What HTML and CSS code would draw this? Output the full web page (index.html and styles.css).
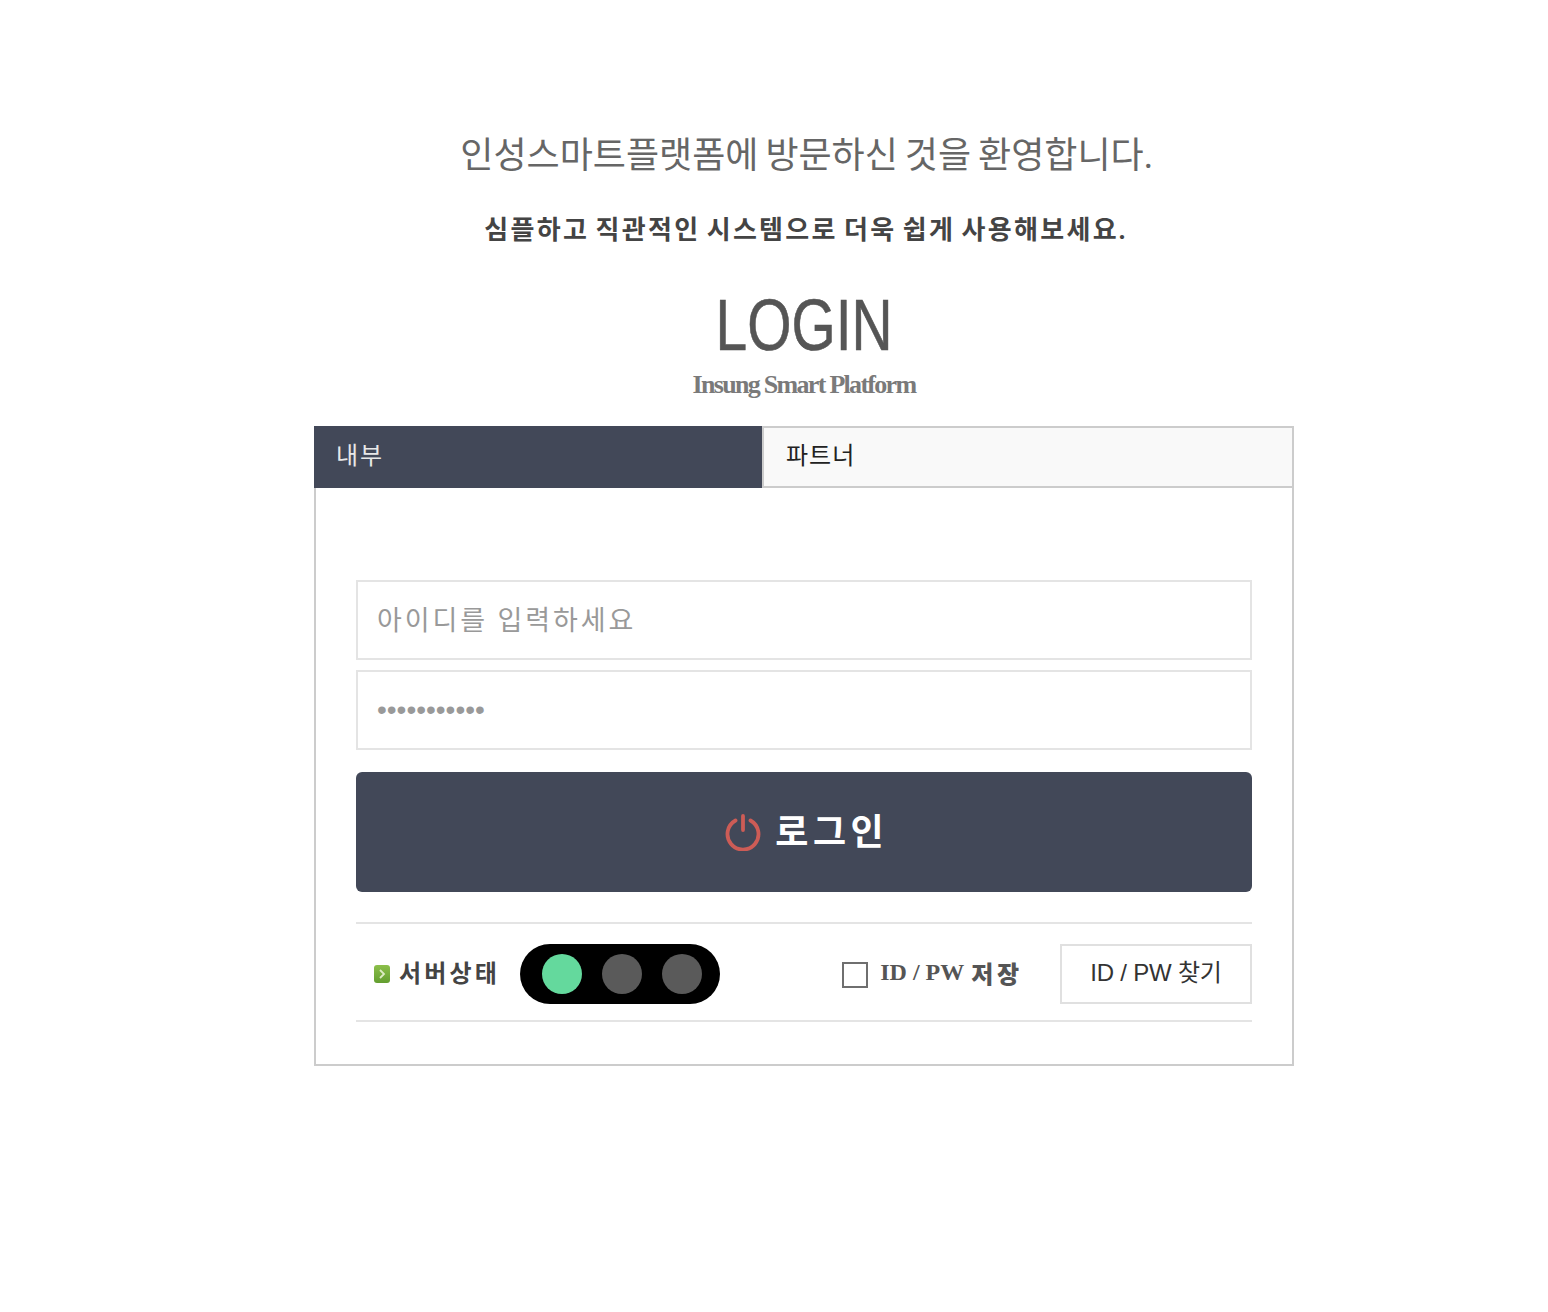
FILE: index.html
```html
<!DOCTYPE html>
<html lang="ko">
<head>
    <meta charset="UTF-8">
    <meta name="viewport" content="width=device-width, initial-scale=1.0">
    <title>인성스마트플랫폼 로그인</title>
    <link rel="stylesheet" href="styles.css">
</head>
<body>
    <div class="wrap">
        <h1 class="welcome">인성스마트플랫폼에 방문하신 것을 환영합니다.</h1>
        <p class="sub">심플하고 직관적인 시스템으로 더욱 쉽게 사용해보세요.</p>
        <h2 class="login-title"><span>LOGIN</span></h2>
        <p class="brand">Insung Smart Platform</p>

        <div class="tabs">
            <a class="tab tab-on">내부</a>
            <a class="tab tab-off">파트너</a>
        </div>
        <div class="panel">
            <input class="field" type="text" placeholder="아이디를 입력하세요">
            <input class="field field-pw" type="password" value="12345678901">
            <button class="login-btn">
                <svg class="power" viewBox="0 0 38 38" width="38" height="38" aria-hidden="true">
                    <path d="M11.5 7.5 A15.5 15.5 0 1 0 26.5 7.5" fill="none" stroke="#cd5c56" stroke-width="3.8" stroke-linecap="round"/>
                    <path d="M19 3 V17" fill="none" stroke="#cd5c56" stroke-width="3.8" stroke-linecap="round"/>
                </svg>
                <span>로그인</span>
            </button>
            <div class="status-row">
                <div class="server">
                    <span class="bullet">
                        <svg viewBox="0 0 16 18" width="16" height="18" aria-hidden="true">
                            <path d="M6 5 L10 9 L6 13" fill="none" stroke="#dcebc4" stroke-width="1.8"/>
                        </svg>
                    </span>
                    <span class="server-label">서버상태</span>
                    <div class="lights">
                        <i class="light light-on"></i>
                        <i class="light"></i>
                        <i class="light"></i>
                    </div>
                </div>
                <label class="save"><span class="check"></span>ID / PW <b>저장</b></label>
                <button class="find-btn">ID / PW 찾기</button>
            </div>
        </div>
    </div>
</body>
</html>
```

FILE: styles.css
```css
* {
    box-sizing: border-box;
}

body {
    margin: 0;
    padding-left: 60px;
    background: #fff;
    font-family: "Liberation Sans", "Noto Sans CJK KR", sans-serif;
}

.wrap {
    width: 980px;
    margin: 0 auto;
    padding-top: 131px;
    padding-bottom: 246px;
    text-align: center;
}

.welcome {
    margin: 0;
    height: 50px;
    padding-left: 5px;
    line-height: 50px;
    font-family: "Liberation Serif", "Noto Sans CJK KR", serif;
    font-size: 36px;
    font-weight: 400;
    letter-spacing: 0;
    word-spacing: -2px;
    color: #666;
    white-space: nowrap;
}

.sub {
    margin: 30px 0 0;
    height: 40px;
    padding-left: 4px;
    line-height: 40px;
    font-family: "Liberation Serif", "Noto Sans CJK KR", serif;
    font-size: 26px;
    font-weight: 700;
    letter-spacing: 2.3px;
    word-spacing: -2.5px;
    color: #444;
}

.login-title {
    margin: 34px 0 0;
    height: 80px;
    line-height: 80px;
    font-size: 72px;
    font-weight: 400;
    letter-spacing: 0;
    color: #555;
}

.login-title span {
    display: inline-block;
    transform: scaleX(0.79);
    -webkit-text-stroke: 0.6px #555;
}

.brand {
    margin: 4px 0 0;
    height: 32px;
    line-height: 32px;
    font-family: "Liberation Serif", serif;
    font-size: 26px;
    font-weight: 700;
    letter-spacing: -1.7px;
    color: #7a7a7a;
}

.tabs {
    display: flex;
    margin-top: 25px;
    height: 62px;
    text-align: left;
}

.tab {
    display: flex;
    align-items: center;
    padding-left: 22px;
    padding-bottom: 8px;
    font-family: "Liberation Serif", "Noto Sans CJK KR", serif;
    font-size: 24px;
    letter-spacing: 1px;
}

.tab-on {
    width: 448px;
    background: #424858;
    color: #e8e8e8;
    letter-spacing: 2px;
}

.tab-off {
    width: 532px;
    background: #f9f9f9;
    border: 2px solid #ccc;
    color: #222;
}

.panel {
    height: 578px;
    padding: 92px 40px 0;
    border: 2px solid #ccc;
    border-top: 0;
}

.field {
    display: block;
    width: 100%;
    height: 80px;
    margin-bottom: 10px;
    padding: 2px 19px 0;
    border: 2px solid #e4e4e4;
    outline: 0;
    background: #fff;
    font-family: "Liberation Serif", "Noto Sans CJK KR", serif;
    font-size: 27px;
    letter-spacing: 2.9px;
    color: #999;
}

.field::placeholder {
    color: #999;
    opacity: 1;
}

.field-pw {
    padding-top: 0;
    font-family: "Liberation Sans", sans-serif;
    font-size: 28px;
    letter-spacing: 0;
}

.login-btn {
    display: flex;
    align-items: center;
    justify-content: center;
    gap: 13px;
    width: 100%;
    height: 120px;
    margin-top: 22px;
    border: 0;
    border-radius: 6px;
    background: #424858;
    font-family: "Liberation Serif", "Noto Sans CJK KR", serif;
    font-size: 36px;
    font-weight: 700;
    letter-spacing: 4.5px;
    color: #fff;
    cursor: pointer;
}

.login-btn span {
    position: relative;
    top: -3px;
    margin-right: -4.5px;
}

.power {
    flex: none;
}

.status-row {
    display: flex;
    align-items: center;
    height: 100px;
    margin-top: 30px;
    padding-top: 4px;
    border-top: 2px solid #e4e4e4;
    border-bottom: 2px solid #e4e4e4;
}

.server {
    display: flex;
    align-items: center;
    padding-left: 18px;
    margin-right: auto;
}

.bullet {
    display: flex;
    flex: none;
    width: 16px;
    height: 18px;
    margin-right: 9px;
    border-radius: 3px;
    background: linear-gradient(#8cbf4a, #639e30);
}

.server-label {
    width: 121px;
    padding-bottom: 6px;
    font-family: "Liberation Serif", "Noto Sans CJK KR", serif;
    font-size: 24px;
    font-weight: 700;
    letter-spacing: 3.2px;
    color: #444;
    text-align: left;
}

.lights {
    display: flex;
    flex: none;
    gap: 20px;
    width: 200px;
    height: 60px;
    padding: 10px 0 10px 22px;
    border-radius: 30px;
    background: #000;
}

.light {
    flex: none;
    width: 40px;
    height: 40px;
    border-radius: 50%;
    background: #5a5a5a;
}

.light-on {
    background: #64d99d;
}

.save {
    display: flex;
    align-items: center;
    margin-right: 37px;
    padding-bottom: 4px;
    font-family: "Liberation Serif", "Noto Sans CJK KR", serif;
    font-size: 24px;
    font-weight: 700;
    letter-spacing: 0;
    color: #555;
}

.save b {
    margin-left: 7px;
    letter-spacing: 3.8px;
}

.check {
    width: 26px;
    height: 26px;
    margin-top: 6px;
    margin-right: 12px;
    border: 2px solid #6f6f6f;
    background: #fff;
}

.find-btn {
    flex: none;
    width: 192px;
    height: 60px;
    padding: 0 0 7px;
    border: 2px solid #e0e0e0;
    background: #fff;
    font-family: "Liberation Sans", "Noto Sans CJK KR", sans-serif;
    font-size: 24px;
    letter-spacing: -0.2px;
    color: #333;
    cursor: pointer;
}
```
